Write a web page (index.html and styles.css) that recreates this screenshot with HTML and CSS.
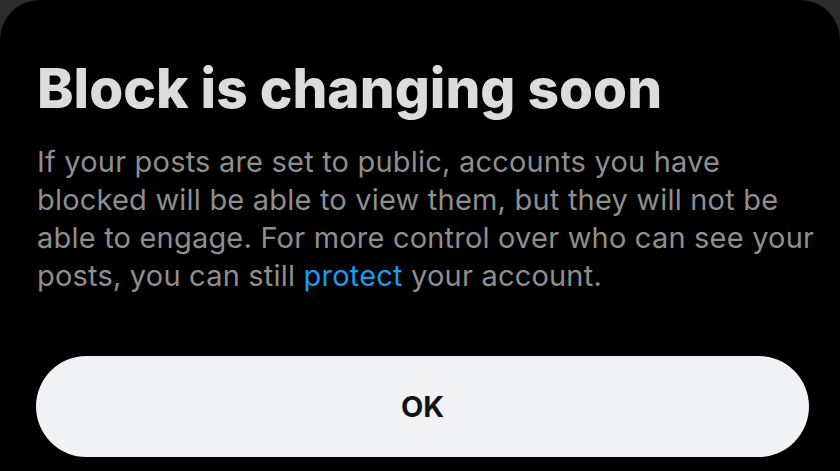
FILE: index.html
```html
<!DOCTYPE html>
<html lang="en">
<head>
<meta charset="utf-8">
<title>Block is changing soon</title>
<link rel="stylesheet" href="styles.css">
</head>
<body>
<div class="sheet">
  <h1 class="title">Block is changing soon</h1>
  <p class="body">If your posts are set to public, accounts you have blocked will be able to view them, but they will not be able to engage. For more control over who can see your posts, you can still <a class="link" href="#">protect</a> your account.</p>
  <button class="ok" type="button">OK</button>
</div>
</body>
</html>
```
FILE: styles.css
```css
html, body {
  margin: 0;
  padding: 0;
  height: 100%;
}
body {
  background: #2b2b2b;
  font-family: Inter, "Noto Sans", sans-serif;
  overflow: hidden;
}
.sheet {
  background: #000;
  min-height: 100%;
  box-sizing: border-box;
  border-radius: 40px 40px 0 0;
  padding: 56px 10px 0 37px;
  display: flex;
  flex-direction: column;
  align-items: flex-start;
}
.title {
  margin: 0;
  color: #dcdcdc;
  font-size: 55px;
  font-weight: 800;
  letter-spacing: 0;
  line-height: 64px;
}
.body {
  margin: 23px 0 0 0;
  color: #8e8e8e;
  font-size: 29px;
  letter-spacing: 0.2px;
  line-height: 38px;
  max-width: 785px;
}
.link {
  color: #1d9bf0;
  text-decoration: none;
}
.ok {
  margin: 61px 0 0 -1px;
  height: 101px;
  width: 773px;
  border: none;
  border-radius: 51px;
  background: #f1f2f3;
  color: #0f1419;
  font-family: Inter, "Noto Sans", sans-serif;
  font-size: 29px;
  font-weight: 700;
  padding: 0;
}
```
